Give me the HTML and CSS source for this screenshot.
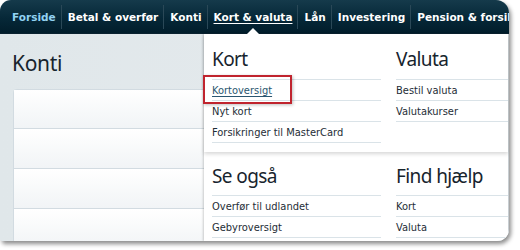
FILE: index.html
```html
<!DOCTYPE html>
<html lang="da">
<head>
<meta charset="utf-8">
<title>Kort &amp; valuta</title>
<link rel="stylesheet" href="styles.css">
</head>
<body>
<div class="window">
  <nav class="topnav">
    <a class="nav-item home">Forside</a>
    <a class="nav-item">Betal &amp; overfør</a>
    <a class="nav-item">Konti</a>
    <a class="nav-item active">Kort &amp; valuta</a>
    <a class="nav-item">Lån</a>
    <a class="nav-item">Investering</a>
    <a class="nav-item">Pension &amp; forsikring</a>
  </nav>
  <main class="content">
    <h1 class="page-title">Konti</h1>
    <div class="account-list">
      <div class="account-row"></div>
      <div class="account-row"></div>
      <div class="account-row"></div>
      <div class="account-row"></div>
    </div>
  </main>
  <div class="pointer"></div>
  <div class="mega">
    <div class="mega-section mega-main">
      <div class="mega-col">
        <h2 class="mega-heading">Kort</h2>
        <a class="mega-link link-current">Kortoversigt</a>
        <a class="mega-link">Nyt kort</a>
        <a class="mega-link">Forsikringer til MasterCard</a>
      </div>
      <div class="mega-col">
        <h2 class="mega-heading">Valuta</h2>
        <a class="mega-link">Bestil valuta</a>
        <a class="mega-link">Valutakurser</a>
      </div>
    </div>
    <div class="mega-section mega-extra">
      <div class="mega-col">
        <h2 class="mega-heading">Se også</h2>
        <a class="mega-link">Overfør til udlandet</a>
        <a class="mega-link">Gebyroversigt</a>
      </div>
      <div class="mega-col">
        <h2 class="mega-heading">Find hjælp</h2>
        <a class="mega-link">Kort</a>
        <a class="mega-link">Valuta</a>
      </div>
    </div>
    <div class="highlight"></div>
  </div>
</div>
</body>
</html>
```

FILE: styles.css
```css
* { box-sizing: border-box; }
html, body { margin: 0; padding: 0; background: #ffffff; }
body { width: 520px; height: 250px; overflow: hidden; font-family: "DejaVu Sans Condensed", "DejaVu Sans", sans-serif; font-stretch: condensed; }

.window {
  position: relative;
  width: 509px;
  height: 241px;
  border-radius: 11px 13px 12px 3px;
  overflow: hidden;
  background: #e3e9ec;
  box-shadow: 2px 3px 4px rgba(0,0,0,0.45);
  display: flex;
  flex-direction: column;
}

.topnav {
  height: 34px;
  flex: none;
  display: flex;
  align-items: center;
  padding-left: 6px;
  white-space: nowrap;
  background: linear-gradient(#153a4b, #062838 55%, #011d2b);
  border-bottom: 1px solid #0a2230;
}
.nav-item {
  font-family: "DejaVu Sans", sans-serif;
  font-stretch: normal;
  font-size: 10.5px;
  font-weight: bold;
  color: #ffffff;
  padding: 0 5px 0 6px;
  line-height: 24px;
  border-left: 1px solid #2a4857;
}
.nav-item.home { color: #92d2f2; border-left: none; }
.nav-item.active { text-decoration: underline; text-underline-offset: 2px; }

.content {
  flex: 1;
  padding: 17px 0 0 13px;
  background: linear-gradient(90deg, #e0e7ea, #e6ebee);
}
.page-title {
  margin: 0 0 13px -1px;
  font-family: "Noto Sans", sans-serif;
  font-stretch: normal;
  font-weight: 400;
  font-size: 21px;
  line-height: 25px;
  letter-spacing: -0.3px;
  color: #17242d;
}
.account-list {
  width: 300px;
  background: #ffffff;
  border: 1px solid #d2dbe1;
  border-right: none;
  border-radius: 4px 0 0 0;
}
.account-row {
  height: 39px;
  border-bottom: 1px solid #d2dbe1;
  background: linear-gradient(#ffffff, #f1f4f6);
}
.account-row + .account-row { height: 40px; }

.pointer {
  position: absolute;
  left: 247px;
  top: 28px;
  width: 0;
  height: 0;
  border-left: 6px solid transparent;
  border-right: 6px solid transparent;
  border-bottom: 6px solid #ffffff;
  z-index: 3;
}

.mega {
  position: absolute;
  left: 204px;
  top: 34px;
  right: 0;
  bottom: 0;
  background: #ffffff;
  box-shadow: -1px 0 2px rgba(0,0,0,0.18);
  border-right: 1px solid #c8ced2;
}
.mega-section {
  display: grid;
  grid-template-columns: 169px 1fr;
  column-gap: 15px;
  padding: 14px 0 9px 8px;
}
.mega-main {
  position: relative;
  z-index: 1;
  box-shadow: 0 2px 4px rgba(0,0,0,0.16);
}
.mega-extra { padding-top: 13px; }
.mega-col { display: flex; flex-direction: column; }
.mega-heading {
  margin: 0;
  padding-bottom: 9px;
  border-bottom: 1px solid #dae3e8;
  font-family: "Noto Sans", sans-serif;
  font-stretch: normal;
  font-weight: 400;
  font-size: 19px;
  line-height: 22px;
  letter-spacing: -0.6px;
  color: #17242d;
}
.mega-extra .mega-heading { padding-bottom: 8px; }
.mega-link {
  height: 21px;
  line-height: 20px;
  padding-top: 1px;
  font-size: 11px;
  color: #1e2d36;
  border-bottom: 1px solid #dae3e8;
  white-space: nowrap;
}
.link-current {
  color: #2b5670;
  text-decoration: underline;
  text-underline-offset: 2px;
}

.highlight {
  position: absolute;
  left: -1px;
  top: 41px;
  width: 89px;
  height: 29px;
  border: 2px solid #c0242e;
  box-shadow: 1px 1px 3px rgba(0,0,0,0.25);
  z-index: 4;
}
```
